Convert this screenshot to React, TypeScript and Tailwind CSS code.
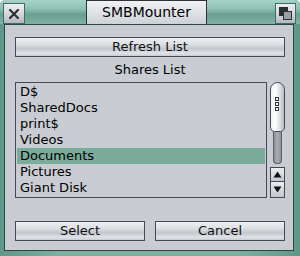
import React from "react";

const btnBg =
  "bg-[linear-gradient(to_bottom,#eef0f3_0%,#dcdfe3_35%,#c3c7cd_60%,#dfe2e6_85%,#c8cbd1_100%)]";

function Button({ label, className = "" }: { label: string; className?: string }) {
  return (
    <div
      className={`h-[20px] border border-[#454a52] ${btnBg} flex items-center justify-center text-[13px] leading-[16px] text-[#111] ${className}`}
    >
      {label}
    </div>
  );
}

const items = ["D$", "SharedDocs", "print$", "Videos", "Documents", "Pictures", "Giant Disk"];

export default function App() {
  return (
    <div
      className="w-[300px] h-[256px] flex flex-col overflow-hidden rounded-tl-[5px] rounded-tr-[5px] bg-[linear-gradient(to_right,#5f9888,#7bb0a1_20%,#7bb0a1_80%,#5f9888)]"
      style={{ fontFamily: '"DejaVu Sans", sans-serif' }}
    >
      {/* title bar */}
      <div className="h-[24px] flex shrink-0">
        <div className="w-[86px] bg-[linear-gradient(to_bottom,#a6d3c6_0%,#8fc2b3_35%,#6a9f90_60%,#7fb3a4_100%)] pl-[3px] pt-[3px] rounded-tl-[5px]">
          <div className="w-[22px] h-[21px] border border-[#3f6e62] bg-[linear-gradient(to_bottom,#eceef1_0%,#d2d5da_55%,#b3b7be_100%)] flex items-center justify-center">
            <svg width="10" height="10" viewBox="0 0 10 10">
              <path d="M1 1 L9 9 M9 1 L1 9" stroke="#2c2f33" strokeWidth="2.2" strokeLinecap="square" />
            </svg>
          </div>
        </div>
        <div className="w-[121px] border border-b-0 border-[#2e3338] bg-[linear-gradient(to_bottom,#f0f1f3_0%,#dfe2e6_50%,#cdd0d5_100%)] flex items-center justify-center text-[14px] text-black">
          SMBMounter
        </div>
        <div className="flex-1 bg-[linear-gradient(to_bottom,#a6d3c6_0%,#8fc2b3_35%,#6a9f90_60%,#7fb3a4_100%)] rounded-tr-[6px] flex justify-end pr-[4px] pt-[3px]">
          <div className="w-[21px] h-[21px] border border-[#3f6e62] bg-[linear-gradient(to_bottom,#eceef1_0%,#d2d5da_55%,#b3b7be_100%)] flex items-center justify-center">
            <svg width="13" height="13" viewBox="0 0 13 13">
              <rect x="0.5" y="0.5" width="8" height="8" fill="#2a2d31" stroke="#2a2d31" />
              <rect x="4.5" y="4.5" width="8" height="8" fill="#9a9ea5" stroke="#2a2d31" />
            </svg>
          </div>
        </div>
      </div>

      {/* body */}
      <div className="flex-1 ml-[4px] mr-[6px] mb-[5px] border border-[#2d4740] bg-[#c9ccd2] flex flex-col pl-[10px] pr-[8px] pt-[12px] text-black">
        <Button label="Refresh List" />
        <div className="h-[25px] flex items-center justify-center text-[13px]">Shares List</div>
        <div className="flex gap-[2px] h-[116px]">
          <div className="w-[252px] border border-[#454a52] p-[1px] flex flex-col">
            {items.map((it) => (
              <div
                key={it}
                className={`h-[16px] leading-[16px] text-[13px] pl-[3px] ${it === "Documents" ? "bg-[#7aab9b]" : ""}`}
              >
                {it}
              </div>
            ))}
          </div>
          <div className="w-[16px] flex flex-col items-center">
            {/* track with thumb */}
            <div className="h-[82px] w-full flex flex-col items-center">
              <div className="w-[15px] h-[50px] rounded-t-[8px] rounded-b-[5px] border border-[#454a52] bg-[linear-gradient(to_right,#f2f3f5_0%,#ffffff_35%,#d0d3d8_80%,#b6bac0_100%)] flex flex-col items-center pt-[14px] gap-[1px]">
                <div className="w-[4px] h-[4px] border border-[#33373c]" />
                <div className="w-[4px] h-[4px] border border-[#33373c]" />
                <div className="w-[4px] h-[4px] border border-[#33373c]" />
              </div>
              <div className="w-[9px] flex-1 rounded-b-[4px] border border-t-0 border-[#5b6067] bg-[linear-gradient(to_right,#8d9198,#a9adb3,#8d9198)]" />
            </div>
            <div className="mt-[3px] w-[15px] h-[15px] border border-[#454a52] bg-[linear-gradient(to_bottom,#eceef1,#c3c7cd)] flex items-center justify-center">
              <svg width="9" height="7" viewBox="0 0 9 7">
                <path d="M4.5 0.5 L8.5 6.5 L0.5 6.5 Z" fill="#111" />
              </svg>
            </div>
            <div className="w-[15px] h-[16px] border border-t-0 border-[#454a52] bg-[linear-gradient(to_bottom,#eceef1,#c3c7cd)] flex items-center justify-center">
              <svg width="9" height="7" viewBox="0 0 9 7">
                <path d="M0.5 0.5 L8.5 0.5 L4.5 6.5 Z" fill="#111" />
              </svg>
            </div>
          </div>
        </div>
        <div className="flex gap-[10px] mt-[23px]">
          <Button label="Select" className="flex-1" />
          <Button label="Cancel" className="flex-1" />
        </div>
      </div>
    </div>
  );
}
